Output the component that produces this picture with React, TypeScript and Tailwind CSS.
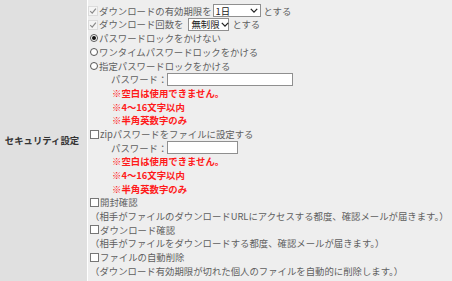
const font = "font-['Meiryo','Noto_Sans_CJK_JP',sans-serif]";

function CheckedBox() {
  return (
    <span className="mr-[1px] inline-flex h-[10px] w-[10px] shrink-0 items-center justify-center border border-[#dcdcdc] bg-[#f4f4f4]">
      <svg viewBox="0 0 10 10" className="h-[8px] w-[8px]">
        <path d="M1.5 5.2 L4 7.6 L8.6 2" fill="none" stroke="#8a8a8a" strokeWidth="1.5" />
      </svg>
    </span>
  );
}

function EmptyBox() {
  return <span className="ml-[2px] mr-[1px] inline-block h-[9px] w-[9px] shrink-0 border border-[#767676] bg-white" />;
}

function Radio({ on }: { on?: boolean }) {
  return (
    <span className="ml-[2px] mr-[1px] inline-flex h-[8px] w-[8px] shrink-0 items-center justify-center rounded-full border border-[#555] bg-white">
      {on && <span className="h-[4px] w-[4px] rounded-full bg-[#111]" />}
    </span>
  );
}

function Select({ label, className }: { label: string; className: string }) {
  return (
    <span className={`mr-[3px] inline-flex h-[13px] shrink-0 items-center justify-between gap-[1px] border border-[#8f8f8f] bg-white pl-[2px] pr-[2px] text-[#222] ${className}`}>
      <span>{label}</span>
      <svg viewBox="0 0 10 6" className="h-[5px] w-[8px] shrink-0">
        <path d="M1 1 L5 5 L9 1" fill="none" stroke="#222" strokeWidth="1.6" />
      </svg>
    </span>
  );
}

function Row({ children, className = "" }: { children: React.ReactNode; className?: string }) {
  return <div className={`flex h-[13.7px] items-center whitespace-nowrap ${className}`}>{children}</div>;
}

function Rules() {
  return (
    <div className="pl-[24px] font-bold text-[#ff1a1a]">
      <Row>※空白は使用できません。</Row>
      <Row>※4～16文字以内</Row>
      <Row>※半角英数字のみ</Row>
    </div>
  );
}

function PasswordRow({ w }: { w: string }) {
  return (
    <Row className="pl-[23px]">
      パスワード：
      <span className={`inline-block h-[13px] border border-[#8f8f8f] bg-white ${w}`} />
    </Row>
  );
}

export default function App() {
  return (
    <div className={`flex h-[281px] w-[452px] overflow-hidden bg-[#eeeeee] text-[9.4px] text-[#5f5f5f] ${font}`}>
      <div className="flex w-[88px] shrink-0 items-center justify-center border-r border-white bg-[#e0e0e0] pr-[3px] font-bold text-[#333]">
        セキュリティ設定
      </div>
      <div className="flex-1 pt-[4px]">
        <Row>
          <CheckedBox />
          ダウンロードの有効期限を
          <Select label="1日" className="ml-[1px] w-[48px]" />
          とする
        </Row>
        <Row>
          <CheckedBox />
          ダウンロード回数を
          <Select label="無制限" className="ml-[5px] w-[41px]" />
          とする
        </Row>
        <Row>
          <Radio on />
          パスワードロックをかけない
        </Row>
        <Row>
          <Radio />
          ワンタイムパスワードロックをかける
        </Row>
        <Row>
          <Radio />
          指定パスワードロックをかける
        </Row>
        <PasswordRow w="w-[126px]" />
        <Rules />
        <Row>
          <EmptyBox />
          zipパスワードをファイルに設定する
        </Row>
        <PasswordRow w="w-[71px]" />
        <Rules />
        <Row>
          <EmptyBox />
          開封確認
        </Row>
        <Row className="pl-[2px]">（相手がファイルのダウンロードURLにアクセスする都度、確認メールが届きます。）</Row>
        <Row>
          <EmptyBox />
          ダウンロード確認
        </Row>
        <Row className="pl-[2px]">（相手がファイルをダウンロードする都度、確認メールが届きます。）</Row>
        <Row>
          <EmptyBox />
          ファイルの自動削除
        </Row>
        <Row className="pl-[2px]">（ダウンロード有効期限が切れた個人のファイルを自動的に削除します。）</Row>
      </div>
    </div>
  );
}
